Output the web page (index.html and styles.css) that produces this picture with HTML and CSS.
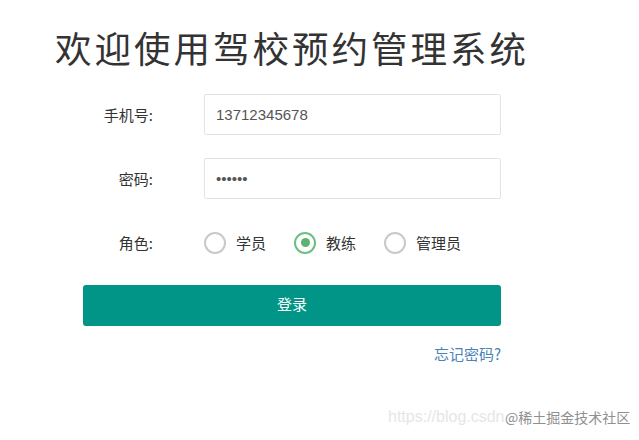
FILE: index.html
```html
<!DOCTYPE html>
<html lang="zh-CN">
<head>
<meta charset="utf-8">
<title>驾校预约管理系统</title>
<link rel="stylesheet" href="styles.css">
</head>
<body>
<div class="page">
  <h1 class="title">欢迎使用驾校预约管理系统</h1>
  <form class="form">
    <div class="row">
      <label class="label">手机号:</label>
      <input class="input" type="text" value="13712345678">
    </div>
    <div class="row">
      <label class="label">密码:</label>
      <input class="input" type="password" value="123456">
    </div>
    <div class="row">
      <label class="label">角色:</label>
      <div class="radios">
        <span class="radio"><i class="dot"></i>学员</span>
        <span class="radio checked"><i class="dot"></i>教练</span>
        <span class="radio"><i class="dot"></i>管理员</span>
      </div>
    </div>
    <button class="btn" type="button">登录</button>
    <div class="forgot"><a href="#">忘记密码?</a></div>
  </form>
</div>
<div class="watermark"><span class="wm-url">https://blog.csdn</span><span class="wm-tag">@稀土掘金技术社区</span></div>
</body>
</html>
```
FILE: styles.css
```css
html, body {
  margin: 0;
  padding: 0;
  background: #fff;
}
body {
  font-family: "Liberation Sans", "Noto Sans CJK SC", sans-serif;
  font-size: 15px;
  color: #333;
  width: 639px;
  height: 440px;
  overflow: hidden;
  position: relative;
}
.page {
  padding-top: 28px;
}
.title {
  margin: 0 0 0 55px;
  font-family: "Noto Sans CJK SC", sans-serif;
  font-weight: 400;
  font-size: 36.5px;
  line-height: 40px;
  color: #333;
  letter-spacing: 3px;
}
.form {
  margin: 26px 0 0 83px;
  width: 418px;
}
.row {
  display: flex;
  align-items: center;
  height: 41px;
  margin-bottom: 23px;
}
.label {
  width: 70px;
  text-align: right;
  margin-right: 51px;
  font-family: "Noto Sans CJK SC", sans-serif;
  font-size: 15px;
  color: #333;
}
.input {
  box-sizing: border-box;
  width: 297px;
  height: 41px;
  border: 1px solid #e3e3e3;
  border-radius: 2px;
  padding: 0 11px;
  font-family: "Liberation Sans", "Noto Sans CJK SC", sans-serif;
  font-size: 15px;
  color: #555;
  outline: none;
  background: #fff;
}
.radios {
  display: flex;
  align-items: center;
  gap: 28px;
}
.radio {
  display: flex;
  align-items: center;
  gap: 10px;
  font-family: "Noto Sans CJK SC", sans-serif;
  font-size: 15px;
  color: #333;
}
.dot {
  box-sizing: border-box;
  width: 22px;
  height: 22px;
  border: 2px solid #c9c9c9;
  border-radius: 50%;
  display: flex;
  align-items: center;
  justify-content: center;
}
.checked .dot {
  border-color: #6dbf82;
}
.checked .dot::after {
  content: "";
  width: 9px;
  height: 9px;
  border-radius: 50%;
  background: #5cb370;
}
.btn {
  display: block;
  width: 418px;
  height: 41px;
  margin-top: -1px;
  border: none;
  border-radius: 3px;
  background: #009587;
  color: #fff;
  font-family: "Noto Sans CJK SC", sans-serif;
  font-size: 15px;
  line-height: 38px;
  padding: 0 0 3px;
}
.forgot {
  text-align: right;
  margin-top: 17px;
  line-height: 22px;
}
.forgot a {
  color: #4a84b6;
  text-decoration: none;
  font-family: "Noto Sans CJK SC", sans-serif;
  font-size: 15px;
}
.watermark {
  position: absolute;
  left: 388px;
  top: 406px;
  white-space: nowrap;
  font-size: 16px;
  line-height: 22px;
}
.wm-url {
  color: #e6e6e6;
  font-family: "Liberation Sans", sans-serif;
}
.wm-tag {
  position: absolute;
  left: 117px;
  top: 0;
  font-family: "Noto Sans CJK SC", sans-serif;
  font-size: 14px;
  color: #8f8f8f;
  text-shadow: 0 0 2px #fff, 0 0 2px #fff;
}
```
